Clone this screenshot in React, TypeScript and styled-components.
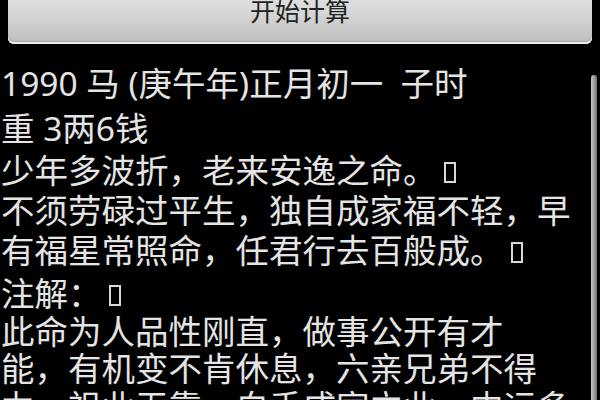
import React from "react";
import styled, { createGlobalStyle } from "styled-components";

const Global = createGlobalStyle`
  html, body {
    margin: 0;
    padding: 0;
    background: #000;
  }
  body {
    width: 600px;
    height: 400px;
    overflow: hidden;
  }
`;

const Screen = styled.div`
  width: 600px;
  height: 400px;
  background: #000;
  display: flex;
  flex-direction: column;
  overflow: hidden;
  font-family: "Noto Sans", "Noto Sans CJK SC", sans-serif;
`;

const ButtonBar = styled.div`
  padding: 0 8px 0 8px;
  flex-shrink: 0;
`;

const CalcButton = styled.button`
  width: 100%;
  height: 56px;
  margin-top: -12px;
  padding: 0 0 21px 0;
  border: none;
  border-radius: 6px;
  background: linear-gradient(#e6e6e6 0%, #d6d6d6 45%, #bebebe 100%);
  box-shadow: inset 0 -2px 0 #ececec, inset 0 -3px 0 #a8a8a8;
  color: #222;
  font-family: "Noto Sans CJK SC", sans-serif;
  font-size: 25px;
  display: flex;
  align-items: flex-end;
  justify-content: center;
  line-height: 25px;
`;

const Body = styled.div`
  flex: 1;
  display: flex;
  min-height: 0;
`;

const TextColumn = styled.div`
  flex: 1;
  padding: 19px 0 0 1px;
  color: #e4e4e4;
  font-size: 33.5px;
`;

const Block = styled.div<{ $gap?: number; $lh?: number }>`
  margin-top: ${(p) => p.$gap ?? 0}px;
  line-height: ${(p) => p.$lh ?? 40}px;
`;

const Line = styled.div`
  white-space: nowrap;
`;

const Tofu = styled.span`
  display: inline-block;
  box-sizing: border-box;
  width: 12px;
  height: 21px;
  border: 2px solid #d8d8d8;
  margin-left: 7px;
`;

const Track = styled.div`
  width: 6px;
  margin: 31px 3px 0 0;
  flex-shrink: 0;
  display: flex;
`;

const Thumb = styled.div`
  flex: 1;
  border-radius: 3px 3px 0 0;
  background: linear-gradient(90deg, #c4c4c4, #9a9a9a 55%, #707070);
`;

export default function App() {
  return (
    <Screen>
      <Global />
      <ButtonBar>
        <CalcButton>开始计算</CalcButton>
      </ButtonBar>
      <Body>
        <TextColumn>
          <Block $lh={40}>
            <Line>1990 马 (庚午年)正月初一&nbsp;&nbsp;子时</Line>
          </Block>
          <Block $gap={5}>
            <Line>重 3两6钱</Line>
          </Block>
          <Block $gap={2}>
            <Line>
              少年多波折，老来安逸之命。
              <Tofu />
            </Line>
            <Line>不须劳碌过平生，独自成家福不轻，早</Line>
            <Line>
              有福星常照命，任君行去百般成。
              <Tofu />
            </Line>
          </Block>
          <Block $gap={5} $lh={37.5}>
            <Line>
              注解：
              <Tofu />
            </Line>
            <Line>此命为人品性刚直，做事公开有才</Line>
            <Line>能，有机变不肯休息，六亲兄弟不得</Line>
            <Line>力，祖业无靠，白手成家立业，中运多</Line>
          </Block>
        </TextColumn>
        <Track>
          <Thumb />
        </Track>
      </Body>
    </Screen>
  );
}
